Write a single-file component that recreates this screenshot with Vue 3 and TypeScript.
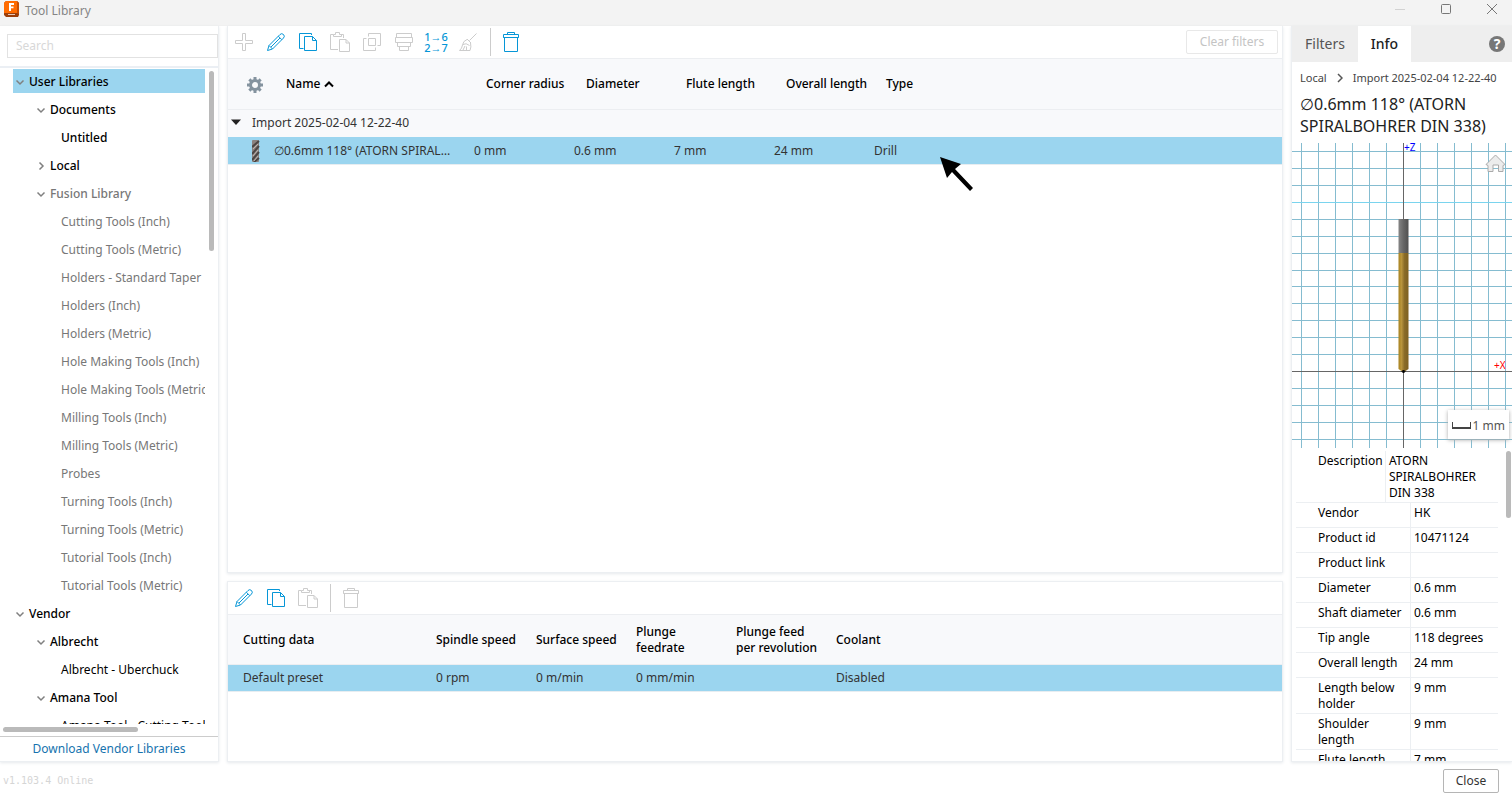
<script setup lang="ts">
import { ref } from 'vue'

interface TreeItem { label: string; level: number; state?: 'open' | 'closed'; tone?: 'muted'; bold?: boolean; selected?: boolean }
interface Tool { icon: string; label: string; active?: boolean; divider?: boolean }

const search = ref('')

const tree: TreeItem[] = [
  { label: 'User Libraries', level: 0, state: 'open', bold: true, selected: true },
  { label: 'Documents', level: 1, state: 'open', bold: true },
  { label: 'Untitled', level: 2, bold: true },
  { label: 'Local', level: 1, state: 'closed', bold: true },
  { label: 'Fusion Library', level: 1, state: 'open', bold: true, tone: 'muted' },
  ...[
    'Cutting Tools (Inch)', 'Cutting Tools (Metric)', 'Holders - Standard Taper', 'Holders (Inch)', 'Holders (Metric)',
    'Hole Making Tools (Inch)', 'Hole Making Tools (Metric)', 'Milling Tools (Inch)', 'Milling Tools (Metric)', 'Probes',
    'Turning Tools (Inch)', 'Turning Tools (Metric)', 'Tutorial Tools (Inch)', 'Tutorial Tools (Metric)',
  ].map((label): TreeItem => ({ label, level: 2, tone: 'muted' })),
  { label: 'Vendor', level: 0, state: 'open', bold: true },
  { label: 'Albrecht', level: 1, state: 'open', bold: true },
  { label: 'Albrecht - Uberchuck', level: 2 },
  { label: 'Amana Tool', level: 1, state: 'open', bold: true },
  { label: 'Amana Tool - Cutting Tools', level: 2 },
]

const icons: Record<string, string> = {
  add: 'M8.5 1.5h3v7h7v3h-7v7h-3v-7h-7v-3h7z',
  edit: 'M1.5 18.5L3 13.5L14 2.5Q15.7 .8 17.5 2.5Q19.2 4.3 17.5 6L6.5 17zM3 13.5L6.5 17M12.3 4.2L15.8 7.7M5 15L14 6',
  copy: 'M13.5 3V1.5H1.5V16.5H5.5M6.5 4.5H14.5L18.5 8.5V18.5H6.5zM14.5 4.5V8.5H18.5',
  paste: 'M3.5 2.5H.5V17.5H8M10.5 2.5H13.5V6M3.5 4.5V2.5H5.5V.5H9.5V2.5H11.5V4.5zM9.5 7.5H16L19.5 11V19.5H9.5zM16 7.5V11H19.5',
  duplicate: 'M6.5 4.5V1.5H18.5V13.5H15.5M4.5 6.5H1.5V18.5H13.5V15.5M6.5 6.5H13.5V13.5H6.5z',
  holder: 'M2.5 1.5H17.5V5.5H2.5zM1.5 5.5H18.5V10.5H1.5zM3.5 10.5V14.5H16.5V10.5M5.5 14.5V18.5H14.5V14.5',
  clean: 'M18.5 1.5L11.5 8.5M9 7L13 11M9 7.5Q5 9 4.500 13Q4 16.500 1.500 18.500H12Q13.500 15 12.500 11M5 12.500Q8 10.500 11.500 13.500M5 18L7 14M8.500 18.500V14.500',
  trash: 'M2.5 5.5H17.5M2.5 2.5H17.5V5.5H2.5zM6.5 2.5V.5H13.5V2.5M3.5 5.5V19.5H16.5V5.5',
}

const toolTools: Tool[] = [
  { icon: 'add', label: 'New tool' },
  { icon: 'edit', label: 'Edit tool', active: true },
  { icon: 'copy', label: 'Copy tool', active: true },
  { icon: 'paste', label: 'Paste tool' },
  { icon: 'duplicate', label: 'Duplicate tool' },
  { icon: 'holder', label: 'Assign holder' },
  { icon: 'renumber', label: 'Renumber tools', active: true },
  { icon: 'clean', label: 'Clean up' },
  { icon: 'trash', label: 'Delete tool', active: true, divider: true },
]
const presetTools: Tool[] = [
  { icon: 'edit', label: 'Edit preset', active: true },
  { icon: 'copy', label: 'Copy preset', active: true },
  { icon: 'paste', label: 'Paste preset' },
  { icon: 'trash', label: 'Delete preset', divider: true },
]

const toolColumns = ['Corner radius', 'Diameter', 'Flute length', 'Overall length', 'Type']
const toolValues = ['0 mm', '0.6 mm', '7 mm', '24 mm', 'Drill']
const presetColumns = ['Cutting data', 'Spindle speed', 'Surface speed', 'Plunge feedrate', 'Plunge feed per revolution', 'Coolant']
const presetValues = ['Default preset', '0 rpm', '0 m/min', '0 mm/min', '', 'Disabled']

const properties: [string, string][] = [
  ['Description', 'ATORN SPIRALBOHRER DIN 338'],
  ['Vendor', 'HK'],
  ['Product id', '10471124'],
  ['Product link', ''],
  ['Diameter', '0.6 mm'],
  ['Shaft diameter', '0.6 mm'],
  ['Tip angle', '118 degrees'],
  ['Overall length', '24 mm'],
  ['Length below holder', '9 mm'],
  ['Shoulder length', '9 mm'],
  ['Flute length', '7 mm'],
]

const gridX = Array.from({ length: 13 }, (_, i) => 9.5 + i * 17)
const gridY = Array.from({ length: 18 }, (_, i) => Math.round(8 + i * 16.93) + 0.5)
</script>

<template>
  <div class="window">
    <header class="titlebar">
      <svg class="logo" width="16" height="16" viewBox="0 0 16 16" aria-hidden="true">
        <path d="M2 0h11l2 2v12l-1 2H2l-2-2V2z" fill="#9c3d08" />
        <path d="M2 0h11v12H0V2z" fill="#ff6b00" />
        <path d="M13 0l2 2v11l-2-1z" fill="#c94f04" />
        <path d="M5 2h5v2H7v1.500h2.500v1.700H7V10H5z" fill="#fff" />
        <path d="M4 13.500h7" stroke="#e8c8b8" />
      </svg>
      <span class="title">Tool Library</span>
      <div class="controls">
        <button type="button" aria-label="Minimize" disabled><svg width="12" height="12"><path d="M1 6.500h10" stroke="#d2d2d2" /></svg></button>
        <button type="button" aria-label="Maximize"><svg width="12" height="12"><rect x="1.500" y="1.500" width="9" height="9" rx="1" fill="none" stroke="#777" /></svg></button>
        <button type="button" aria-label="Close window"><svg width="12" height="12"><path d="M1 1l10 10M11 1L1 11" stroke="#777" /></svg></button>
      </div>
    </header>

    <main class="body">
      <aside class="panel libraries">
        <div class="search"><input v-model="search" type="text" placeholder="Search" aria-label="Search" /></div>
        <nav class="tree-area" aria-label="Libraries">
          <div class="tree-view">
            <ul class="tree">
              <li v-for="item in tree" :key="item.label" :class="['level' + item.level, item.tone, { bold: item.bold, selected: item.selected }]">
                <svg v-if="item.state" class="chevron" width="10" height="10" viewBox="0 0 10 10" aria-hidden="true">
                  <path :d="item.state === 'open' ? 'M1.500 3.500L5 7L8.500 3.500' : 'M3.500 1.500L7 5L3.500 8.500'" fill="none" stroke="#808080" stroke-width="1.500" />
                </svg>
                <span>{{ item.label }}</span>
              </li>
            </ul>
            <div class="scroll-y"></div>
          </div>
          <div class="scroll-x"></div>
        </nav>
        <a class="download" href="#vendor">Download Vendor Libraries</a>
      </aside>

      <div class="center">
        <section class="panel tools">
          <div class="toolbar">
            <template v-for="tool in toolTools" :key="tool.icon">
              <span v-if="tool.divider" class="divider"></span>
              <button type="button" class="tool" :class="{ active: tool.active }" :aria-label="tool.label" :disabled="!tool.active">
                <span v-if="tool.icon === 'renumber'" class="renumber"><span>1→6</span><span>2→7</span></span>
                <svg v-else width="20" height="20" viewBox="0 0 20 20"><path :d="icons[tool.icon]" fill="none" stroke="currentColor" /></svg>
              </button>
            </template>
            <button type="button" class="clear" disabled>Clear filters</button>
          </div>
          <table class="grid tool-grid">
            <colgroup><col class="c-icon" /><col class="c-name" /><col class="c-val" /><col class="c-val" /><col class="c-val" /><col class="c-val" /><col /></colgroup>
            <thead>
              <tr>
                <th scope="col" class="gear-cell">
                  <button type="button" aria-label="Column settings">
                    <svg width="16" height="16" viewBox="0 0 16 16">
                      <circle cx="8" cy="8" r="4.500" fill="none" stroke="#84939f" stroke-width="3" />
                      <path v-for="a in 8" :key="a" d="M6.500 0h3v3h-3z" fill="#84939f" :transform="`rotate(${a * 45} 8 8)`" />
                    </svg>
                  </button>
                </th>
                <th scope="col">Name <svg width="10" height="8" viewBox="0 0 10 8"><path d="M1 6.500L5 2.500L9 6.500" fill="none" stroke="#000" stroke-width="2" /></svg></th>
                <th v-for="c in toolColumns" :key="c" scope="col">{{ c }}</th>
              </tr>
            </thead>
            <tbody>
              <tr class="group">
                <td colspan="7"><svg width="10" height="6" viewBox="0 0 10 6"><path d="M0 .500h10L5 6z" fill="#222" /></svg>Import 2025-02-04 12-22-40</td>
              </tr>
              <tr class="picked">
                <td class="drill-cell">
                  <svg width="8" height="22" viewBox="0 0 8 22">
                    <rect width="7" height="22" rx="1" fill="#8b8380" />
                    <path d="M0 7L7 1M0 14L7 6M0 20L7 12M2 22L7 18" stroke="#4c4643" stroke-width="2" />
                    <path d="M1 9L6 4M1 16L6 10M2 21L6 16" stroke="#bdb4af" />
                  </svg>
                </td>
                <td class="ellipsis">∅0.6mm 118° (ATORN SPIRALBOHRER DIN 338)</td>
                <td v-for="v in toolValues" :key="v">{{ v }}</td>
              </tr>
            </tbody>
          </table>
          <svg class="pointer" width="34" height="36" viewBox="0 0 34 36" aria-hidden="true">
            <path d="M0 0L21 7L15 12L33 31L30 34L12 15L7 21z" fill="#000" />
          </svg>
        </section>

        <section class="panel presets">
          <div class="toolbar">
            <template v-for="tool in presetTools" :key="tool.icon">
              <span v-if="tool.divider" class="divider"></span>
              <button type="button" class="tool" :class="{ active: tool.active }" :aria-label="tool.label" :disabled="!tool.active">
                <svg width="20" height="20" viewBox="0 0 20 20"><path :d="icons[tool.icon]" fill="none" stroke="currentColor" /></svg>
              </button>
            </template>
          </div>
          <table class="grid preset-grid">
            <colgroup><col class="c-preset" /><col class="c-val" /><col class="c-val" /><col class="c-val" /><col class="c-val" /><col /></colgroup>
            <thead><tr><th v-for="c in presetColumns" :key="c" scope="col"><span>{{ c }}</span></th></tr></thead>
            <tbody><tr class="picked"><td v-for="(v, i) in presetValues" :key="i">{{ v }}</td></tr></tbody>
          </table>
        </section>
      </div>

      <aside class="panel info">
        <div class="tabs">
          <button type="button">Filters</button>
          <button type="button" class="current">Info</button>
          <button type="button" class="help" aria-label="Help">?</button>
        </div>
        <div class="crumbs">
          <span>Local</span>
          <svg width="6" height="10" viewBox="0 0 6 10"><path d="M1 1l4 4l-4 4" fill="none" stroke="#555" stroke-width="1.500" /></svg>
          <span>Import 2025-02-04 12-22-40</span>
        </div>
        <h1>∅0.6mm 118° (ATORN SPIRALBOHRER DIN 338)</h1>
        <div class="viewer">
          <svg class="scene" width="221" height="305" viewBox="0 0 221 305" role="img" aria-label="Tool preview">
            <defs>
              <linearGradient id="steel"><stop offset="0" stop-color="#858585" /><stop offset=".5" stop-color="#666" /><stop offset="1" stop-color="#505050" /></linearGradient>
              <linearGradient id="gold"><stop offset="0" stop-color="#a98420" /><stop offset=".3" stop-color="#b8943c" /><stop offset=".6" stop-color="#8a6c28" /><stop offset="1" stop-color="#7d6020" /></linearGradient>
            </defs>
            <g stroke="#85bcd0">
              <path v-for="x in gridX" :key="'x' + x" :d="`M${x} 0V305`" />
              <path v-for="y in gridY" :key="'y' + y" :d="`M0 ${y}H221`" />
            </g>
            <path d="M0 59.500H221" stroke="#7ad4ee" />
            <path d="M111.500 0V305M0 228.500H221" stroke="#666" />
            <rect x="106.500" y="76" width="10" height="34" fill="url(#steel)" />
            <path d="M106.500 110h10v116l-3 2h-4l-3-2z" fill="url(#gold)" />
            <path d="M110 228.500L111.500 227L113 228.500L111.500 230z" fill="#000" stroke="#000" />
            <text x="112" y="8" class="axis z">+Z</text>
            <text x="202" y="226" class="axis x">+X</text>
            <path d="M194 21.500L203.500 12L213 21.500L211 22.500V28.500H206.500V22H201V28.500H196V22.500z" fill="#ececec" stroke="#aaa" />
          </svg>
          <div class="scale"><span class="ruler"></span>1 mm</div>
        </div>
        <div class="properties">
          <table>
            <tbody>
              <tr v-for="([name, value], i) in properties" :key="name" :class="{ first: i === 0 }">
                <th scope="row">{{ name }}</th><td>{{ value }}</td>
              </tr>
            </tbody>
          </table>
          <div class="scroll-info"></div>
        </div>
      </aside>
    </main>

    <footer class="footer">
      <span class="version">v1.103.4 Online</span>
      <button type="button" class="close">Close</button>
    </footer>
  </div>
</template>

<style>
body { margin: 0; }
</style>

<style scoped>
* { box-sizing: border-box; }
.window { display: flex; flex-direction: column; height: 100vh; overflow: hidden; background: #fff; color: #000; font: 12px/16px "Noto Sans", sans-serif; }
button { font: inherit; color: inherit; margin: 0; padding: 0; border: 0; background: none; }
svg { display: block; flex: none; }

.titlebar { flex: none; display: flex; height: 26px; padding: 1px 6px 4px 4px; gap: 5px; background: #f3f3f3; border-bottom: 1px solid #f0f0f0; color: #858585; }
.title { line-height: 20px; }
.controls { display: flex; margin-left: auto; gap: 18px; }
.controls button { display: flex; align-items: center; justify-content: center; width: 28px; height: 16px; }

.body { flex: 1; min-height: 0; display: flex; gap: 8px; }
.panel { background: #fff; border: 1px solid #eceff2; box-shadow: 0 1px 3px #e6e9ec; }

.libraries { flex: none; display: flex; flex-direction: column; width: 219px; border-left: 0; border-top: 0; }
.search { padding: 8px 0 8px 7px; border-bottom: 2px solid #ebeff4; }
.search input { display: block; width: 211px; height: 24px; padding: 0 8px 2px; border: 1px solid #e2e2e2; outline: 0; font: inherit; background: #fff; }
.search input::placeholder { color: #d8d8d8; opacity: 1; }
.tree-area { flex: 1; min-height: 0; display: flex; flex-direction: column; padding: 1px 3px 4px 3px; }
.tree-view { flex: 1; min-height: 0; display: flex; justify-content: space-between; overflow: hidden; margin-bottom: 3px; }
.tree { width: 192px; margin: 0 0 0 10px; padding: 0; list-style: none; overflow: hidden; }
.tree li { display: flex; align-items: center; gap: 4px; height: 24px; margin-bottom: 4px; padding: 2px 0 0 2px; white-space: nowrap; }
.tree li.level1 { padding-left: 23px; }
.tree li.level2 { padding-left: 48px; }
.tree li.bold { font-weight: 500; }
.tree li.muted { color: #777; }
.tree li.selected { background: #9bd5ef; }
.scroll-y { width: 5px; height: 180px; margin: 2px 1px 0 0; border-radius: 3px; background: #bababa; }
.scroll-x { flex: none; width: 135px; height: 5px; border-radius: 3px; background: #bababa; }
.download { flex: none; padding: 4px 0; border-top: 1px solid #ccc; color: #1673ae; text-align: center; text-decoration: none; }

.center { flex: 1; min-width: 0; display: flex; flex-direction: column; gap: 8px; }
.tools { flex: 1; position: relative; min-height: 0; border-top: 0; }
.presets { flex: none; height: 181px; }
.toolbar { display: flex; align-items: center; height: 33px; border-bottom: 1px solid #eceef1; }
.tool { display: flex; align-items: center; justify-content: center; flex: none; width: 32px; height: 32px; color: #ccc; }
.tool.active { color: #0696d7; }
.divider { width: 1px; height: 28px; margin: 0 4px 0 6px; background: #ccc; }
.renumber { display: flex; flex-direction: column; font-weight: 500; line-height: 11px; font-size: 11px; }
.clear { width: 92px; height: 24px; margin: 0 4px 0 auto; border: 1px solid #e8e8e8; border-radius: 2px; color: #c4c4c4; }

.grid { width: 100%; table-layout: fixed; border-collapse: collapse; text-align: left; }
.grid th { height: 50px; padding: 0 0 0 16px; background: #f8f9fb; font-weight: 500; white-space: nowrap; border-bottom: 1px solid #eceef1; }
.grid th svg { display: inline-block; }
.grid td { height: 27px; padding: 1px 0 0 4px; color: #333; }
.grid .picked { background: #9bd5ef; border-bottom: 1px solid #e7edf1; }
.c-icon { width: 42px; }
.c-name { width: 200px; }
.c-val { width: 100px; }
.c-preset { width: 193px; }
.grid th.gear-cell { padding: 3px 0 0 19px; }
.gear-cell button, .grid .gear-cell svg { display: block; }
.group { background: #f8f9fb; }
.grid .group td { height: 28px; padding: 0 0 0 3px; }
.group svg { display: inline-block; margin: 0 11px 2px 0; }
.grid .drill-cell { padding-left: 24px; }
.ellipsis { overflow: hidden; text-overflow: ellipsis; white-space: nowrap; }
.grid td.ellipsis { padding-right: 18px; }
.pointer { position: absolute; left: 712px; top: 131px; }
.preset-grid th { height: 49px; white-space: normal; }
.grid.preset-grid th, .grid.preset-grid td { padding-left: 15px; }
.grid.preset-grid th { height: 49px; padding-top: 1px; }

.info { flex: none; display: flex; flex-direction: column; width: 221px; border-right: 0; border-top: 0; overflow: hidden; }
.tabs { flex: none; display: flex; align-items: center; height: 36px; background: #eee; font-size: 14px; color: #555; }
.tabs button { width: 66px; height: 36px; }
.tabs .current { width: 53px; background: #fff; font-weight: 500; color: #222; }
.tabs .help { width: 16px; height: 16px; margin: 0 7px 0 auto; border-radius: 8px; background: #777; color: #fff; font-weight: 700; line-height: 16px; }
.crumbs { flex: none; display: flex; align-items: center; gap: 10px; padding: 8px 0 0 8px; font-size: 11px; color: #444; white-space: nowrap; }
h1 { flex: none; margin: 7px 0 6px; padding: 0 8px; font-size: 16px; line-height: 22px; font-weight: 400; color: #222; }
.viewer { flex: none; position: relative; }
.axis { font-size: 10px; }
.z { fill: #00f; }
.x { fill: #f00; }
.scale { position: absolute; right: 3px; bottom: 9px; display: flex; align-items: center; justify-content: space-between; width: 61px; height: 29px; padding: 2px 4px 0; background: #fff; box-shadow: 0 1px 4px #aaa; color: #555; }
.ruler { width: 19px; height: 7px; border: solid #444; border-width: 0 1px 2px; }
.properties { flex: 1; min-height: 0; display: flex; justify-content: space-between; padding: 3px 1px 0 4px; overflow: hidden; }
.properties table, .properties tbody { display: block; width: 202px; }
.properties tr { display: flex; min-height: 25px; border-bottom: 1px solid #eceff2; }
.properties th { width: 115px; padding: 2px 4px 1px 22px; border-right: 1px solid #eceff2; font-weight: 400; text-align: left; }
.properties td { flex: 1; padding: 2px 0 1px 3px; }
.properties .first th { width: 90px; padding-right: 0; }
.scroll-info { width: 5px; height: 67px; border-radius: 3px; background: #bababa; }

.footer { flex: none; display: flex; align-items: center; justify-content: space-between; height: 35px; padding: 3px 13px 0 3px; }
.version { font: 10px/16px "DejaVu Sans Mono", monospace; color: #d5d5d5; }
.close { width: 56px; height: 24px; border: 1px solid #b5b5b5; border-radius: 2px; color: #333; }
</style>
